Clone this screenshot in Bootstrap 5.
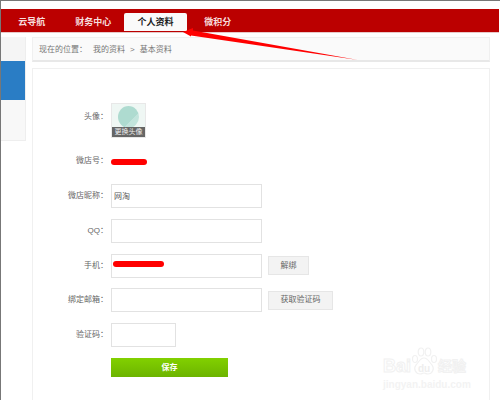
<!DOCTYPE html>
<html lang="zh-CN">

<head>
    <meta charset="UTF-8">
    <meta name="viewport" content="width=device-width, initial-scale=1.0">
    <title>基本资料</title>
    <link href="https://cdn.jsdelivr.net/npm/bootstrap@5.3.3/dist/css/bootstrap.min.css" rel="stylesheet">
    <style>
        html, body { height: 400px; overflow: hidden; }
        body { font-family: "Liberation Sans", "Noto Sans CJK SC", sans-serif; font-size: 8px; color: #666; background: #fff; position: relative; border-top: 1px solid #777; border-left: 1px solid #777; }

        .top-bar { margin: 8px 1px 0 0; height: 23px; background: #bb0000; box-shadow: 0 1px 0 #e8c8c8; }
        .top-tab { width: 61.5px; height: 18px; line-height: 18px; margin-top: 4px; text-align: center; color: #f6dcdc; font-weight: 700; font-size: 9px; }
        .top-tab.on { width: 63px; background: #fafafa; color: #222; border-radius: 2px 2px 0 0; }

        .page-body { height: 340px; margin-top: 5px; gap: 6px; }
        .side-col { width: 25px; height: 104px; background: #f5f5f5; border-right: 1px solid #eee; border-bottom: 1px solid #eee; }
        .side-blue { height: 39px; margin-top: 24px; background: #2a7dc5; }
        .side-rest { height: 40px; background: #f8f8f8; }
        .main-col { width: 458px; }
        .crumb-bar { height: 25px; padding: 1px 0 0 6px; gap: 6px; background: #fafafa; border: 1px solid #f0f0f0; border-bottom: 2px solid #e8e8e8; color: #777; }
        .crumb-sep { margin: 0 5px; }
        .form-box { height: 340px; margin-top: 6px; padding-top: 34px; border: 1px solid #f0f0f0; }

        .form-line { height: 34.8px; }
        .avatar-line { margin-bottom: 6px; }
        .avatar-name { padding-bottom: 6px; }
        .save-line { height: 30px; }
        .form-name { width: 75px; text-align: right; margin-right: 3px; flex-shrink: 0; }
        .avatar-box { width: 35px; height: 35px; background: #eff7f4; border: 1px solid #e8e8e8; position: relative; overflow: hidden; }
        .avatar-dot { width: 21px; height: 22px; margin: 2px auto 0; border-radius: 50%; background: linear-gradient(135deg, #aedbd0 65%, #c2e4dc 65%); }
        .avatar-cap { position: absolute; left: 0; right: 0; bottom: 0; height: 10px; line-height: 10px; text-align: center; font-size: 7px; color: #eee; background: #666; }
        .field-box { width: 151px; height: 24px; padding: 0 2px; font-size: 8px; color: #555; border: 1px solid #e2e2e2; border-radius: 0; box-shadow: none; }
        .field-short { width: 65px; }
        .grey-btn { padding: 0; height: 19px; margin-left: 6px; font-size: 8px; color: #666; background: #f3f3f3; border: 1px solid #e6e6e6; border-radius: 0; }
        .btn-unbind { width: 41px; }
        .btn-code { width: 65px; }
        .save-btn { width: 117px; height: 19px; padding: 0; font-size: 8px; font-weight: 700; color: #fff; background: linear-gradient(#82d000, #6cb400); border: 0; border-radius: 0; }

        .scribble { display: block; background: #f00; border-radius: 4px; }
        .scribble-id { width: 36px; height: 6px; margin-top: 1px; }
        .scribble-phone { width: 51px; height: 6px; position: absolute; left: 2px; top: 7px; }

        .arrow-layer { position: absolute; left: -1px; top: -1px; pointer-events: none; }
        .water-mark { position: absolute; left: 382px; top: 346px; width: 90px; color: #fff; font-weight: 700; -webkit-text-stroke: 1px #f1f1f1; }
        .water-main { height: 28px; }
        .water-word { font-size: 18px; line-height: 18px; }
        .water-paw { width: 26px; height: 28px; flex-shrink: 0; }
        .water-cjk { font-size: 14px; line-height: 18px; margin-left: 1px; }
        .water-url { font-size: 10px; line-height: 14px; margin-top: 3px; white-space: nowrap; -webkit-text-stroke: 0; color: #f3f3f3; }
    </style>
</head>

<body>
    <div class="top-bar d-flex">
        <div class="top-tab">云导航</div>
        <div class="top-tab">财务中心</div>
        <div class="top-tab on">个人资料</div>
        <div class="top-tab">微积分</div>
    </div>

    <div class="page-body d-flex">
        <div class="side-col">
            <div class="side-blue"></div>
            <div class="side-rest"></div>
        </div>
        <div class="main-col">
            <div class="crumb-bar d-flex align-items-center">
                <span>现在的位置：</span>
                <span>我的资料<span class="crumb-sep">&gt;</span>基本资料</span>
            </div>
            <div class="form-box">
                <div class="form-line avatar-line d-flex align-items-center">
                    <div class="form-name avatar-name">头像：</div>
                    <div class="avatar-box">
                        <div class="avatar-dot"></div>
                        <div class="avatar-cap">更换头像</div>
                    </div>
                </div>
                <div class="form-line d-flex align-items-center">
                    <div class="form-name">微店号：</div>
                    <span class="scribble scribble-id"></span>
                </div>
                <div class="form-line d-flex align-items-center">
                    <div class="form-name">微店昵称：</div>
                    <input type="text" class="form-control field-box" value="网淘">
                </div>
                <div class="form-line d-flex align-items-center">
                    <div class="form-name">QQ：</div>
                    <input type="text" class="form-control field-box">
                </div>
                <div class="form-line d-flex align-items-center">
                    <div class="form-name">手机：</div>
                    <div class="position-relative">
                        <input type="text" class="form-control field-box">
                        <span class="scribble scribble-phone"></span>
                    </div>
                    <button class="btn grey-btn btn-unbind">解绑</button>
                </div>
                <div class="form-line d-flex align-items-center">
                    <div class="form-name">绑定邮箱：</div>
                    <input type="text" class="form-control field-box">
                    <button class="btn grey-btn btn-code">获取验证码</button>
                </div>
                <div class="form-line d-flex align-items-center">
                    <div class="form-name">验证码：</div>
                    <input type="text" class="form-control field-box field-short">
                </div>
                <div class="form-line save-line d-flex align-items-center">
                    <div class="form-name"></div>
                    <button class="btn save-btn">保存</button>
                </div>
            </div>
        </div>
    </div>

    <svg class="arrow-layer" width="500" height="100">
        <polygon points="183,32 193,28 193,30.5 358,60 191,35.5 191,36.5" fill="#f00"></polygon>
    </svg>

    <div class="water-mark">
        <div class="water-main d-flex align-items-end">
            <span class="water-word">Bai</span>
            <svg class="water-paw" viewBox="0 0 26 28">
                <g fill="#fff" stroke="#f1f1f1" stroke-width="1.2">
                    <ellipse cx="4" cy="12" rx="2.5" ry="3.5"></ellipse>
                    <ellipse cx="10" cy="5" rx="2.8" ry="4"></ellipse>
                    <ellipse cx="17" cy="5" rx="2.8" ry="4"></ellipse>
                    <ellipse cx="23" cy="12" rx="2.5" ry="3.5"></ellipse>
                    <path d="M13 11c-4 0-5 4-8 7-3 4 0 9 4 9 2 0 3-1 4-1s2 1 4 1c4 0 7-5 4-9-3-3-4-7-8-7z"></path>
                </g>
                <text x="13" y="25" text-anchor="middle" font-size="10" fill="#eee" stroke="none">du</text>
            </svg>
            <span class="water-cjk">经验</span>
        </div>
        <div class="water-url">jingyan.baidu.com</div>
    </div>

    <script src="https://cdn.jsdelivr.net/npm/bootstrap@5.3.3/dist/js/bootstrap.bundle.min.js"></script>
</body>

</html>
